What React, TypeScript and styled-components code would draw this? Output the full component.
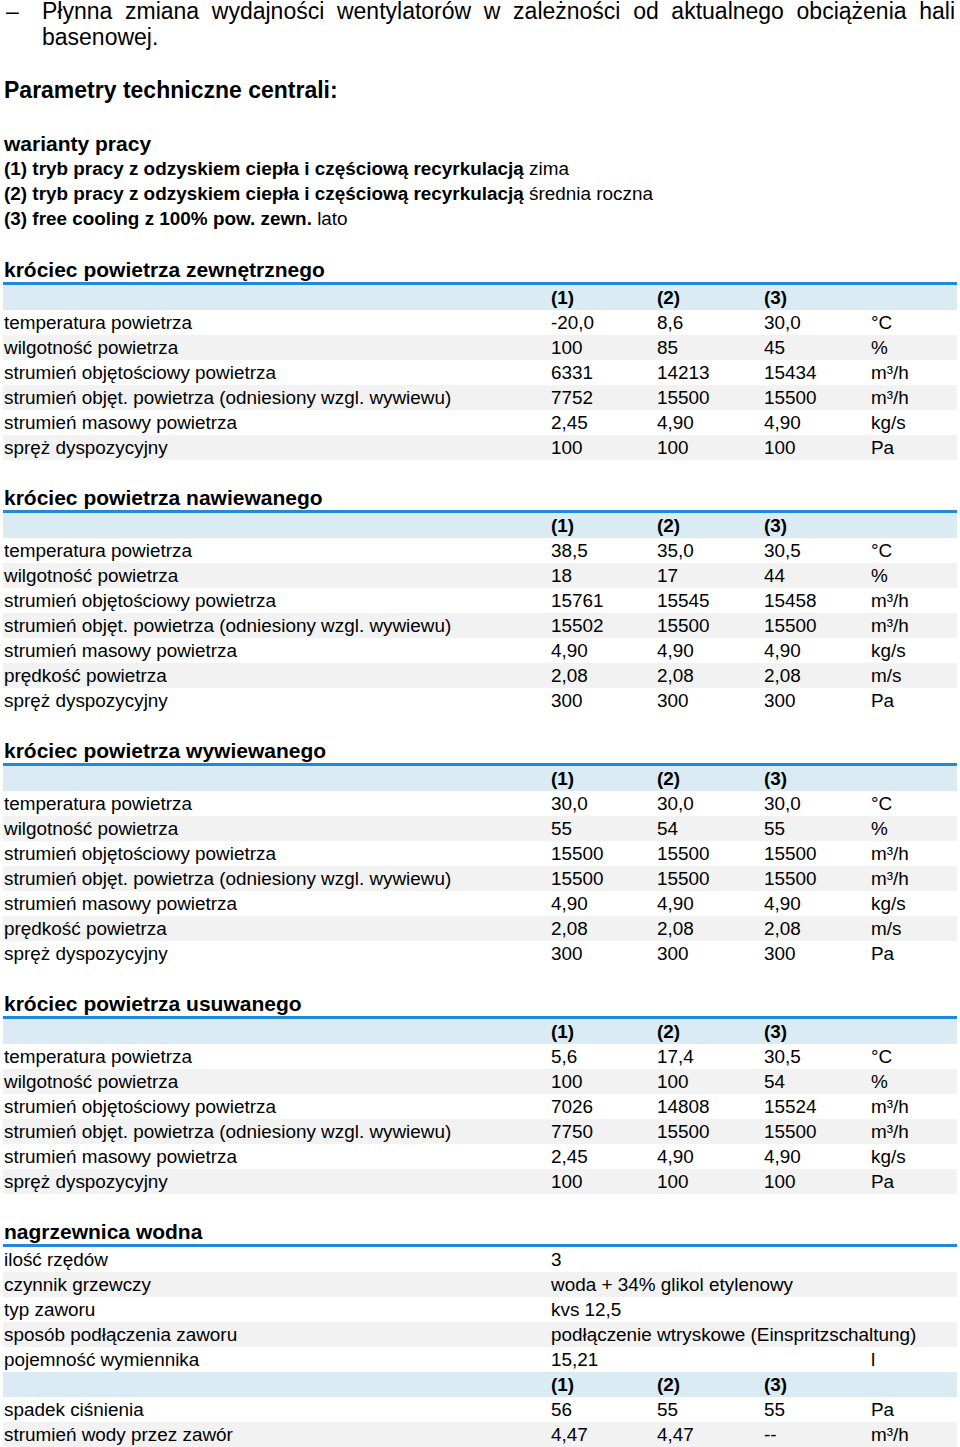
import React from "react";
import styled, { createGlobalStyle } from "styled-components";

const Global = createGlobalStyle`
  html, body { margin: 0; padding: 0; background: #fff; }
  body { font-family: "Liberation Sans", Arial, sans-serif; color: #000; }
`;

const Page = styled.div`
  width: 960px;
  display: flex;
  flex-direction: column;
`;

const Bullet = styled.div`
  display: grid;
  grid-template-columns: 42px 1fr;
  margin-top: -2px;
  padding-right: 5px;
  font-size: 23px;
  line-height: 26px;
`;

const Dash = styled.span`
  padding-left: 6px;
`;

const Justified = styled.p`
  margin: 0;
  text-align: justify;
`;

const Heading = styled.h2`
  margin: 27px 0 0 4px;
  font-size: 23px;
  line-height: 26px;
  font-weight: bold;
`;

const Variants = styled.div`
  margin: 28px 0 0 4px;
  display: flex;
  flex-direction: column;
  font-size: 18.9px;
  line-height: 25px;
`;

const VariantTitle = styled.div`
  font-weight: bold;
  font-size: 21px;
`;

const B = styled.b`
  font-weight: bold;
`;

const Section = styled.section`
  margin-left: 3px;
  width: 954px;
  display: flex;
  flex-direction: column;
  padding-top: 25px;
  &:first-of-type {
    padding-top: 26px;
  }
`;

const SectionTitle = styled.div`
  height: 25px;
  line-height: 25px;
  padding-left: 1px;
  font-size: 21px;
  font-weight: bold;
  border-bottom: 3px solid #1f8ad9;
`;

const Row = styled.div<{ $tone: "white" | "gray" | "blue" }>`
  display: grid;
  grid-template-columns: 547px 106px 107px 107px 1fr;
  height: 25px;
  line-height: 25px;
  font-size: 18.9px;
  background: ${(p) =>
    p.$tone === "blue" ? "#daebf3" : p.$tone === "gray" ? "#f2f2f2" : "#ffffff"};
  font-weight: ${(p) => (p.$tone === "blue" ? "bold" : "normal")};
`;

const Cell = styled.div<{ $span?: number }>`
  padding-left: 1px;
  white-space: nowrap;
  ${(p) => (p.$span ? `grid-column: span ${p.$span};` : "")}
`;

type DataRow = [string, string, string, string, string];

const HeaderRow: React.FC = () => (
  <Row $tone="blue">
    <Cell />
    <Cell>(1)</Cell>
    <Cell>(2)</Cell>
    <Cell>(3)</Cell>
    <Cell />
  </Row>
);

const DataTable: React.FC<{ title: string; rows: DataRow[] }> = ({ title, rows }) => (
  <Section>
    <SectionTitle>{title}</SectionTitle>
    <HeaderRow />
    {rows.map((r, i) => (
      <Row key={i} $tone={i % 2 === 1 ? "gray" : "white"}>
        {r.map((c, j) => (
          <Cell key={j}>{c}</Cell>
        ))}
      </Row>
    ))}
  </Section>
);

const sec1: DataRow[] = [
  ["temperatura powietrza", "-20,0", "8,6", "30,0", " °C"],
  ["wilgotność powietrza", "100", "85", "45", "%"],
  ["strumień objętościowy powietrza", "6331", "14213", "15434", "m³/h"],
  ["strumień objęt. powietrza (odniesiony wzgl. wywiewu)", "7752", "15500", "15500", "m³/h"],
  ["strumień masowy powietrza", "2,45", "4,90", "4,90", "kg/s"],
  ["spręż dyspozycyjny", "100", "100", "100", "Pa"],
];

const sec2: DataRow[] = [
  ["temperatura powietrza", "38,5", "35,0", "30,5", " °C"],
  ["wilgotność powietrza", "18", "17", "44", "%"],
  ["strumień objętościowy powietrza", "15761", "15545", "15458", "m³/h"],
  ["strumień objęt. powietrza (odniesiony wzgl. wywiewu)", "15502", "15500", "15500", "m³/h"],
  ["strumień masowy powietrza", "4,90", "4,90", "4,90", "kg/s"],
  ["prędkość powietrza", "2,08", "2,08", "2,08", "m/s"],
  ["spręż dyspozycyjny", "300", "300", "300", "Pa"],
];

const sec3: DataRow[] = [
  ["temperatura powietrza", "30,0", "30,0", "30,0", " °C"],
  ["wilgotność powietrza", "55", "54", "55", "%"],
  ["strumień objętościowy powietrza", "15500", "15500", "15500", "m³/h"],
  ["strumień objęt. powietrza (odniesiony wzgl. wywiewu)", "15500", "15500", "15500", "m³/h"],
  ["strumień masowy powietrza", "4,90", "4,90", "4,90", "kg/s"],
  ["prędkość powietrza", "2,08", "2,08", "2,08", "m/s"],
  ["spręż dyspozycyjny", "300", "300", "300", "Pa"],
];

const sec4: DataRow[] = [
  ["temperatura powietrza", "5,6", "17,4", "30,5", " °C"],
  ["wilgotność powietrza", "100", "100", "54", "%"],
  ["strumień objętościowy powietrza", "7026", "14808", "15524", "m³/h"],
  ["strumień objęt. powietrza (odniesiony wzgl. wywiewu)", "7750", "15500", "15500", "m³/h"],
  ["strumień masowy powietrza", "2,45", "4,90", "4,90", "kg/s"],
  ["spręż dyspozycyjny", "100", "100", "100", "Pa"],
];

export default function App() {
  return (
    <Page>
      <Global />
      <Bullet>
        <Dash>–</Dash>
        <Justified>
          Płynna zmiana wydajności wentylatorów w zależności od aktualnego obciążenia hali
          basenowej.
        </Justified>
      </Bullet>
      <Heading>Parametry techniczne centrali:</Heading>
      <Variants>
        <VariantTitle>warianty pracy</VariantTitle>
        <div>
          <B>(1) tryb pracy z odzyskiem ciepła i częściową recyrkulacją</B> zima
        </div>
        <div>
          <B>(2) tryb pracy z odzyskiem ciepła i częściową recyrkulacją</B> średnia roczna
        </div>
        <div>
          <B>(3) free cooling z 100% pow. zewn.</B> lato
        </div>
      </Variants>
      <DataTable title="króciec powietrza zewnętrznego" rows={sec1} />
      <DataTable title="króciec powietrza nawiewanego" rows={sec2} />
      <DataTable title="króciec powietrza wywiewanego" rows={sec3} />
      <DataTable title="króciec powietrza usuwanego" rows={sec4} />
      <Section>
        <SectionTitle>nagrzewnica wodna</SectionTitle>
        <Row $tone="white">
          <Cell>ilość rzędów</Cell>
          <Cell $span={4}>3</Cell>
        </Row>
        <Row $tone="gray">
          <Cell>czynnik grzewczy</Cell>
          <Cell $span={4}>woda + 34% glikol etylenowy</Cell>
        </Row>
        <Row $tone="white">
          <Cell>typ zaworu</Cell>
          <Cell $span={4}>kvs 12,5</Cell>
        </Row>
        <Row $tone="gray">
          <Cell>sposób podłączenia zaworu</Cell>
          <Cell $span={4}>podłączenie wtryskowe (Einspritzschaltung)</Cell>
        </Row>
        <Row $tone="white">
          <Cell>pojemność wymiennika</Cell>
          <Cell $span={3}>15,21</Cell>
          <Cell>l</Cell>
        </Row>
        <HeaderRow />
        <Row $tone="white">
          <Cell>spadek ciśnienia</Cell>
          <Cell>56</Cell>
          <Cell>55</Cell>
          <Cell>55</Cell>
          <Cell>Pa</Cell>
        </Row>
        <Row $tone="gray">
          <Cell>strumień wody przez zawór</Cell>
          <Cell>4,47</Cell>
          <Cell>4,47</Cell>
          <Cell>--</Cell>
          <Cell>m³/h</Cell>
        </Row>
      </Section>
    </Page>
  );
}
